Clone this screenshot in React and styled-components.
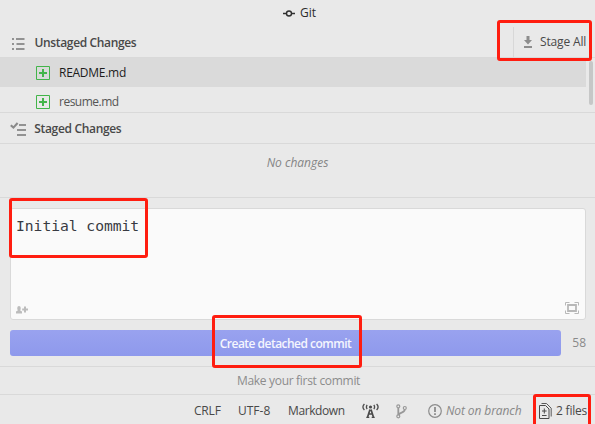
import React from "react";
import styled, { createGlobalStyle } from "styled-components";

const GlobalStyle = createGlobalStyle`
  * { box-sizing: border-box; }
  html, body { margin: 0; background: #e9e9e9; overflow: hidden; }
  svg { display: block; flex: none; }
`;

const Panel = styled.div`
  position: relative;
  display: flex;
  flex-direction: column;
  width: 595px;
  height: 424px;
  overflow: hidden;
  background: #e9e9e9;
  color: #484848;
  font: 12px/16px "Open Sans", "Noto Sans", sans-serif;
`;

const Label = styled.span`
  white-space: nowrap;
  letter-spacing: ${(p) => p.$track || 0}px;
  font-weight: ${(p) => p.$weight || 400};
  font-style: ${(p) => (p.$italic ? "italic" : "normal")};
  color: ${(p) => p.$color || "inherit"};
`;

const TitleBar = styled.header`
  display: flex;
  align-items: center;
  gap: 5px;
  height: 28px;
  padding: 0 0 3px 283px;
  color: #2c2c2c;
`;

const SectionHeader = styled.div`
  display: flex;
  align-items: center;
  gap: ${(p) => p.$gap}px;
  height: ${(p) => p.$height}px;
  padding: 1px 0 0 ${(p) => p.$indent}px;
  border-bottom: 1px solid #d9d9d9;
`;

const StageAll = styled.button`
  display: flex;
  align-items: center;
  gap: 8px;
  align-self: flex-end;
  height: 30px;
  width: 82px;
  margin-left: auto;
  padding: 0 0 0 10px;
  border: 0;
  border-left: 1px solid #d8d8d8;
  background: none;
  color: inherit;
  font: inherit;
`;

const FileArea = styled.div`
  display: flex;
  justify-content: space-between;
  height: 55px;
  overflow: hidden;
  border-bottom: 1px solid #d9d9d9;
`;

const FileList = styled.ul`
  width: 586px;
  margin: 0;
  padding: 0;
  list-style: none;
`;

const FileRow = styled.li`
  display: flex;
  align-items: center;
  gap: 9px;
  height: 29px;
  padding-left: 36px;
  background: ${(p) => (p.$selected ? "#dadada" : "transparent")};
  color: ${(p) => (p.$selected ? "#1c1c1c" : "#555")};
`;

const Scrollbar = styled.div`
  width: 4px;
  height: 44px;
  margin: 3px 2px 0 0;
  border-radius: 2px;
  background: #c6c7c7;
`;

const Empty = styled.div`
  display: flex;
  justify-content: center;
  height: 54px;
  padding-top: 11px;
  border-bottom: 1px solid #d9d9d9;
`;

const CommitArea = styled.section`
  display: flex;
  flex-direction: column;
  gap: 10px;
  height: 169px;
  padding: 10px 9px 0 10px;
  border-bottom: 1px solid #d9d9d9;
`;

const Editor = styled.div`
  display: flex;
  flex-direction: column;
  justify-content: space-between;
  height: 112px;
  padding: 7px 6px 5px 5px;
  border: 1px solid #d9d9d9;
  border-radius: 3px;
  background: #fafafa;
`;

const Message = styled.div`
  color: #383a42;
  font: 14.67px/20px "DejaVu Sans Mono", monospace;
  letter-spacing: -0.03px;
`;

const EditorTools = styled.div`
  display: flex;
  align-items: flex-end;
  justify-content: space-between;
`;

const SubmitRow = styled.div`
  display: flex;
  align-items: center;
  justify-content: space-between;
`;

const CommitButton = styled.button`
  width: 551px;
  height: 26px;
  padding: 1px 0 0;
  border: 0;
  border-radius: 3px;
  background: linear-gradient(#99a2ef, #8e99ec);
  color: #f5f6fe;
  font: inherit;
`;

const Recent = styled.div`
  display: flex;
  align-items: center;
  justify-content: center;
  height: 28px;
  padding-left: 2px;
  border-bottom: 1px solid #d9d9d9;
`;

const StatusBar = styled.footer`
  display: flex;
  align-items: center;
  height: 29px;
  padding: 3px 0 0 194px;
`;

const StatusItem = styled.div`
  display: flex;
  align-items: center;
  gap: ${(p) => p.$gap || 0}px;
  flex: 0 0 ${(p) => p.$width}px;
`;

const Highlight = styled.div`
  position: absolute;
  left: ${(p) => p.$x}px;
  top: ${(p) => p.$y}px;
  width: ${(p) => p.$w}px;
  height: ${(p) => p.$h}px;
  border: 3px solid #ff1d10;
  border-radius: 3px;
  pointer-events: none;
`;

const CommitIcon = () => (
  <svg width="12" height="12" viewBox="0 0 12 12" fill="none" stroke="#303030" strokeWidth="1.4">
    <circle cx="6" cy="6.5" r="2.5" />
    <path d="M0 6.5h3.2M8.8 6.5H12" />
  </svg>
);

const ListIcon = () => (
  <svg width="13" height="13" viewBox="0 0 13 13" fill="#929292">
    <path d="M0 1h2v2H0zM4 1h8.5v2H4zM0 6h2v2H0zM4.5 6h8v2h-8zM0 11h2v2H0zM4 11h8.5v2H4z" />
  </svg>
);

const CheckListIcon = () => (
  <svg width="16" height="14" viewBox="0 0 16 14">
    <path d="M9 2h7v2H9zM7 7h9v2H7zM7 12h9v2H7z" fill="#929292" />
    <path d="M.8 3.2 3.4 5.6 7.6 1" fill="none" stroke="#8a8a8a" strokeWidth="2.1" />
  </svg>
);

const AddedIcon = () => (
  <svg width="14" height="14" viewBox="0 0 14 14">
    <path d="M.5.5h13v13H.5z" fill="none" stroke="#43b54a" />
    <path d="M6 3h2v3h3v2H8v3H6V8H3V6h3z" fill="#43b54a" />
  </svg>
);

const DownIcon = () => (
  <svg width="8" height="12" viewBox="0 0 8 12" fill="#8d8d8d">
    <path d="M2.5 0h3v4H8L4 8.5 0 4h2.5zM0 10h8v2H0z" />
  </svg>
);

const PersonAddIcon = () => (
  <svg width="12" height="8" viewBox="0 0 12 8" fill="#bcbcbc">
    <path d="M1.3 1.7a1.7 1.7 0 0 1 3.4 0v1.3L4.2 4.4l1.8 1V7.5H0V5.4l1.8-1L1.3 3zM8 .5h2v2h2v2h-2v2H8v-2H6.2v-2H8z" />
  </svg>
);

const ExpandIcon = () => (
  <svg width="14" height="12" viewBox="0 0 14 12" fill="none" stroke="#b8b8b8">
    <path d="M.5 3.5V.5h4M9.5.5h4v3M13.5 8.5v3h-4M4.5 11.5h-4v-3" />
    <path d="M3 3h8v6H3z" strokeWidth="1.8" />
  </svg>
);

const BroadcastIcon = () => (
  <svg width="17" height="16" viewBox="0 0 17 16" fill="none" stroke="#4a4a4a" strokeWidth="1.3">
    <path d="M2.4 1Q-.6 4 2.4 7M5.2 2Q3.6 4 5.2 6M14.6 1q3 3 0 6M11.8 2Q13.4 4 11.8 6" />
    <circle cx="8.5" cy="4" r="1.6" fill="#4a4a4a" stroke="none" />
    <path d="M8 6.6 5.6 14M9 6.6l2.4 7.4M6.5 11h4" strokeWidth="1.7" />
    <path d="M4.3 14.3h3M9.7 14.3h3" />
  </svg>
);

const BranchIcon = () => (
  <svg width="11" height="15" viewBox="0 0 11 15" fill="none" stroke="#989898" strokeWidth="1.2">
    <circle cx="2.3" cy="2.3" r="1.5" />
    <circle cx="2.3" cy="12.3" r="1.5" />
    <circle cx="8.8" cy="4" r="1.5" />
    <path d="M2.3 4v7M8.8 5.6C8.8 9 4.2 7.5 2.6 11" strokeWidth="1.8" />
  </svg>
);

const AlertIcon = () => (
  <svg width="14" height="14" viewBox="0 0 14 14">
    <circle cx="7" cy="7" r="6.3" fill="none" stroke="#8c8c8c" strokeWidth="1.2" />
    <path d="M6.1 3h1.8v5H6.1zM6.1 9.2h1.8V11H6.1z" fill="#8c8c8c" />
  </svg>
);

const FilesIcon = () => (
  <svg width="14" height="16" viewBox="0 0 14 16" fill="none" stroke="#4a4a4a">
    <path d="M.5 2.5h6l3.5 3.5v9.5H.5z" />
    <path d="M2.5.5h5l4.7 4.7v8.3" strokeWidth=".9" />
    <path d="M5.3 5.5v5M3 8h4.6M3 12.5h4.6" />
  </svg>
);

export default function App() {
  return (
    <Panel>
      <GlobalStyle />
      <TitleBar>
        <CommitIcon />
        <Label>Git</Label>
      </TitleBar>
      <SectionHeader $height={30} $indent={12} $gap={9.5}>
        <ListIcon />
        <Label $weight={600} $track={-0.35}>Unstaged Changes</Label>
        <StageAll>
          <DownIcon />
          <Label $track={-0.15}>Stage All</Label>
        </StageAll>
      </SectionHeader>
      <FileArea>
        <FileList>
          <FileRow $selected>
            <AddedIcon />
            <Label $track={-0.27}>README.md</Label>
          </FileRow>
          <FileRow>
            <AddedIcon />
            <Label $track={-0.5}>resume.md</Label>
          </FileRow>
        </FileList>
        <Scrollbar />
      </FileArea>
      <SectionHeader $height={31} $indent={10} $gap={8.3}>
        <CheckListIcon />
        <Label $weight={600} $track={-0.33}>Staged Changes</Label>
      </SectionHeader>
      <Empty>
        <Label $italic $color="#858585">No changes</Label>
      </Empty>
      <CommitArea>
        <Editor>
          <Message>Initial commit</Message>
          <EditorTools>
            <PersonAddIcon />
            <ExpandIcon />
          </EditorTools>
        </Editor>
        <SubmitRow>
          <CommitButton>
            <Label $weight={600} $track={-0.52}>Create detached commit</Label>
          </CommitButton>
          <Label $color="#8a8a8a">58</Label>
        </SubmitRow>
      </CommitArea>
      <Recent>
        <Label $color="#8c8c8c" $track={-0.3}>Make your first commit</Label>
      </Recent>
      <StatusBar>
        <StatusItem $width={44}><Label $track={-0.2}>CRLF</Label></StatusItem>
        <StatusItem $width={50}><Label>UTF-8</Label></StatusItem>
        <StatusItem $width={74}><Label $track={-0.4}>Markdown</Label></StatusItem>
        <StatusItem $width={34}><BroadcastIcon /></StatusItem>
        <StatusItem $width={32}><BranchIcon /></StatusItem>
        <StatusItem $width={111} $gap={4}>
          <AlertIcon />
          <Label $italic $color="#888" $track={-0.1}>Not on branch</Label>
        </StatusItem>
        <StatusItem $width={50} $gap={3}>
          <FilesIcon />
          <Label $track={-0.2}>2 files</Label>
        </StatusItem>
      </StatusBar>
      <Highlight $x={497} $y={20} $w={95} $h={41} />
      <Highlight $x={9} $y={198} $w={139} $h={60} />
      <Highlight $x={212} $y={315} $w={150} $h={53} />
      <Highlight $x={533} $y={394} $w={58} $h={34} />
    </Panel>
  );
}
